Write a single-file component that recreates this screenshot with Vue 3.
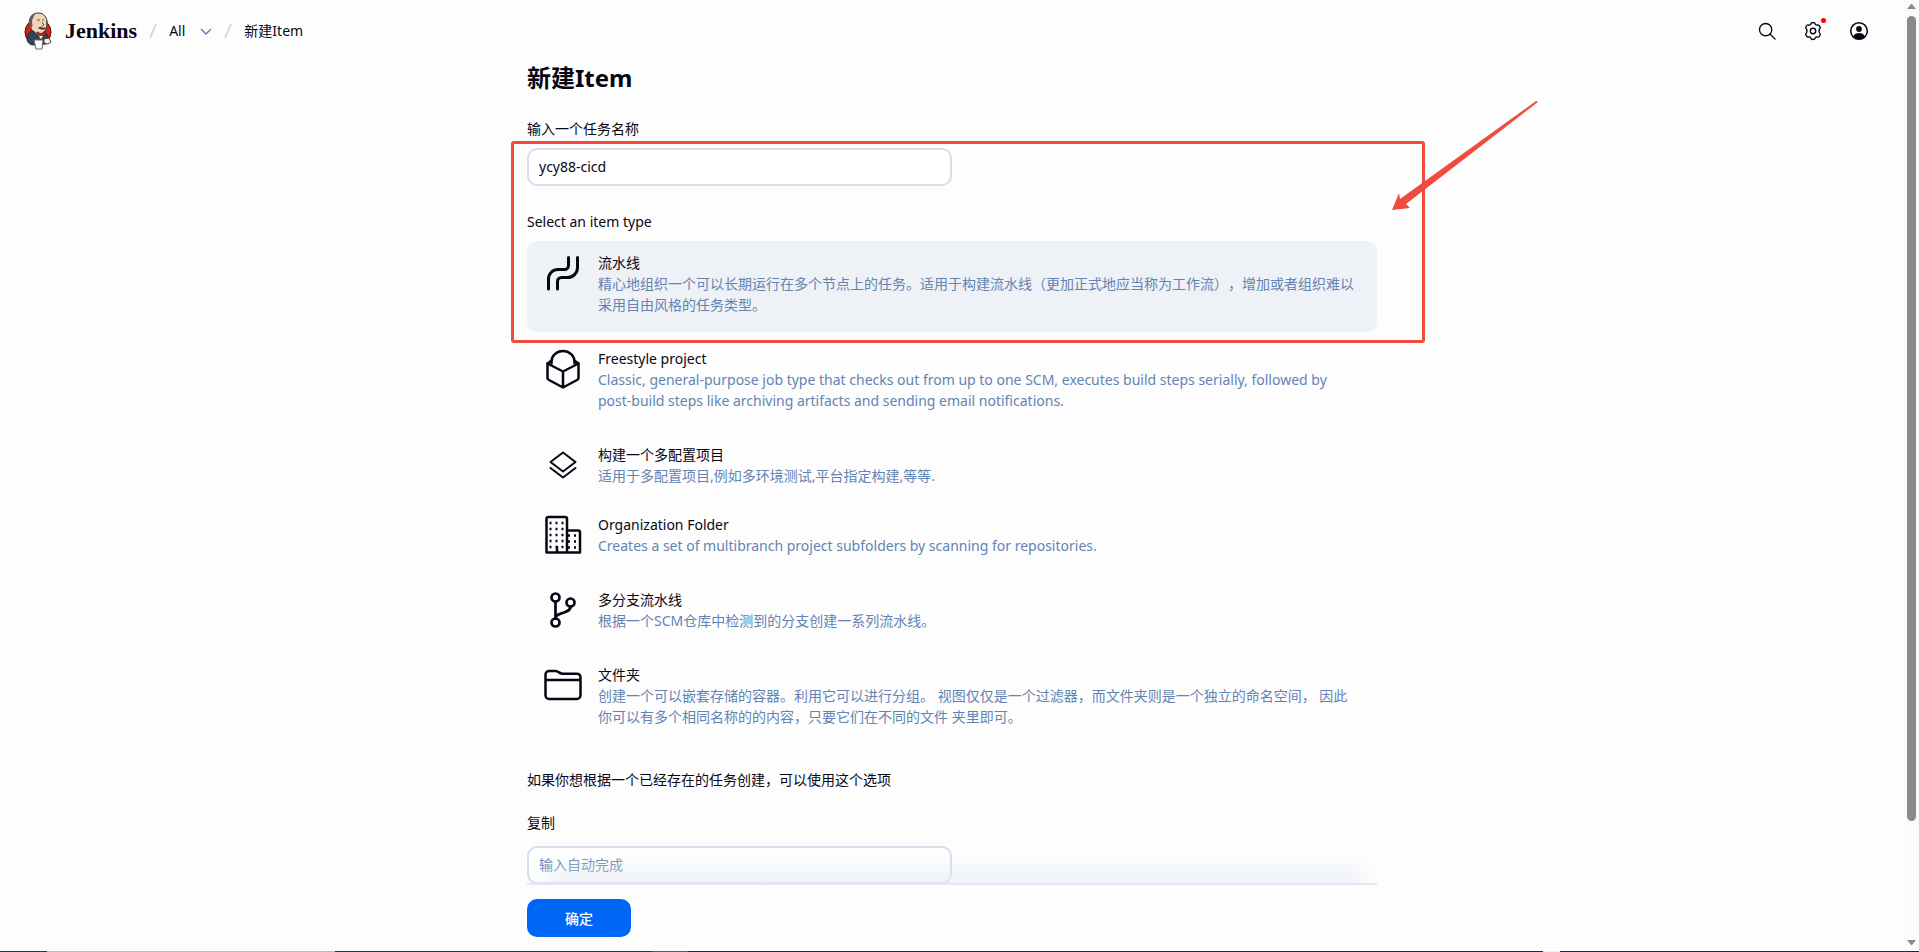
<script setup>
import { ref } from 'vue'

const name = ref('ycy88-cicd')
const copyFrom = ref('')
const selected = ref('pipeline')

const types = [
  {
    id: 'pipeline',
    title: '流水线',
    text: '精心地组织一个可以长期运行在多个节点上的任务。适用于构建流水线（更加正式地应当称为工作流），增加或者组织难以采用自由风格的任务类型。'
  },
  {
    id: 'freestyle',
    title: 'Freestyle project',
    text: 'Classic, general-purpose job type that checks out from up to one SCM, executes build steps serially, followed by post-build steps like archiving artifacts and sending email notifications.'
  },
  {
    id: 'matrix',
    title: '构建一个多配置项目',
    text: '适用于多配置项目,例如多环境测试,平台指定构建,等等.'
  },
  {
    id: 'organization',
    title: 'Organization Folder',
    text: 'Creates a set of multibranch project subfolders by scanning for repositories.'
  },
  {
    id: 'multibranch',
    title: '多分支流水线',
    text: '根据一个SCM仓库中检测到的分支创建一系列流水线。'
  },
  {
    id: 'folder',
    title: '文件夹',
    text: '创建一个可以嵌套存储的容器。利用它可以进行分组。 视图仅仅是一个过滤器，而文件夹则是一个独立的命名空间， 因此你可以有多个相同名称的的内容，只要它们在不同的文件 夹里即可。'
  }
]
</script>

<template>
  <div class="window">
    <div class="page">
      <header class="header">
        <nav class="crumbs" aria-label="Breadcrumb">
          <a class="brand" href="#">
            <svg class="logo" viewBox="0 0 28 38" aria-hidden="true">
              <ellipse cx="14" cy="20" rx="13" ry="13" fill="#d3201c" stroke="#4a1512" stroke-width="1" />
              <path d="M6 13C5 5 9 1 14 1c6 0 9 4 9 10 0 7-3 11-7 11-5 0-9-3-10-9z" fill="#f0d6b7" stroke="#3a2a25" stroke-width="1" />
              <path d="M5 13C4 6 7 2 12 1 9 4 9 7 8 9c0 3 1 4 0 6-1 1-3 0-3-2z" fill="#5d5a5c" />
              <path d="M22 6c2 2 2 5 1 8l-1-4z" fill="#5d5a5c" />
              <path d="M13 8h3M18 8h2M18 10l2 3-2 1" fill="none" stroke="#6b5142" stroke-width="1" />
              <path d="M14 16c2-2 4-1 5 0 1-1 3-1 3 1-3 1-5 1-8-1z" fill="#49403c" />
              <path d="M4 22c2-2 3-3 5-3l7 5 5-3c2 1 3 2 3 4l-2 7-12 1c-4 0-6-2-7-5z" fill="#2c4858" stroke="#1a2d38" stroke-width="1" />
              <path d="M11 20l6 7 4-6-4 1z" fill="#fff" />
              <path d="M13 20l4 2 4-3v5l-4-1-4 2z" fill="#d33833" stroke="#5a1512" stroke-width="1" />
              <path d="M20 27l5-1 2 4-3 2-4-1z" fill="#f4f4f4" stroke="#49403c" stroke-width="1" />
              <path d="M10 28h9l-1 9h-6z" fill="#fff" stroke="#6a6a6a" stroke-width="1" />
            </svg>
            <span class="wordmark">Jenkins</span>
          </a>
          <svg class="slash" viewBox="0 0 8 16" aria-hidden="true"><path d="M7 1L1 15" /></svg>
          <a class="crumb" href="#">All</a>
          <button class="more" type="button" aria-label="All">
            <svg viewBox="0 0 12 12" aria-hidden="true"><path d="M1 4l5 5 5-5" /></svg>
          </button>
          <svg class="slash" viewBox="0 0 8 16" aria-hidden="true"><path d="M7 1L1 15" /></svg>
          <span class="crumb" aria-current="page">新建Item</span>
        </nav>
        <div class="actions">
          <button class="action" type="button" aria-label="Search">
            <svg viewBox="0 0 512 512" aria-hidden="true">
              <path d="M221 64a157 157 0 10157 157A157 157 0 00221 64z" fill="none" stroke="currentColor" stroke-width="34" />
              <path d="M338 338l126 126" fill="none" stroke="currentColor" stroke-width="34" stroke-linecap="round" />
            </svg>
          </button>
          <button class="action" type="button" aria-label="Manage">
            <svg viewBox="0 0 20 20" fill="none" stroke="currentColor" stroke-width="1.4" stroke-linejoin="round" aria-hidden="true">
              <circle cx="10" cy="10" r="2.7" />
              <path d="M10 1.500c1.200 0 1.900.2 2.100 1.100.3 1.300 1.200 1.800 2.500 1.400.9-.3 1.500.1 2.200 1.300s.7 1.900 0 2.500c-1 .9-1 3.500 0 4.400.7.600.6 1.300 0 2.500s-1.300 1.600-2.200 1.300c-1.300-.4-2.200.1-2.500 1.400-.2.9-.9 1.100-2.100 1.100s-1.900-.2-2.100-1.100c-.3-1.300-1.200-1.800-2.500-1.400-.9.3-1.500-.1-2.200-1.300s-.7-1.900 0-2.500c1-.9 1-3.500 0-4.400-.7-.6-.6-1.300 0-2.500S4.500 3.700 5.400 4c1.300.4 2.200-.1 2.500-1.400.2-.9.9-1.100 2.100-1.100z" />
            </svg>
            <span class="badge"></span>
          </button>
          <button class="action" type="button" aria-label="Account">
            <svg viewBox="0 0 20 20" aria-hidden="true">
              <circle cx="10" cy="10" r="8.300" fill="none" stroke="currentColor" stroke-width="1.500" />
              <circle cx="10" cy="8" r="2.900" fill="currentColor" />
              <path d="M4.300 15.500c1-2.400 3-3.400 5.700-3.400s4.700 1 5.700 3.400c-1.500 1.700-3.400 2.600-5.700 2.600s-4.200-.9-5.700-2.600z" fill="currentColor" />
            </svg>
          </button>
        </div>
      </header>

      <form class="form" @submit.prevent>
        <div class="scroll">
          <div class="column">
            <h1>新建Item</h1>
            <label class="label" for="name">输入一个任务名称</label>
            <input id="name" v-model="name" class="field" type="text" />

            <h2 id="type-label" class="label type-label">Select an item type</h2>
            <div class="types" role="radiogroup" aria-labelledby="type-label">
              <label
                v-for="t in types"
                :key="t.id"
                :class="['type', 'type-' + t.id, { selected: selected === t.id }]"
              >
                <input v-model="selected" class="radio" type="radio" name="type" :value="t.id" />
                <svg class="icon" viewBox="0 0 48 48" aria-hidden="true">
                  <g v-if="t.id === 'pipeline'" stroke-width="3">
                    <path d="M29.500 8.500v8a4 4 0 01-4 4H19A9.500 9.500 0 009.500 30v10M38.500 8.500v10a10 10 0 01-10 10h-6a4 4 0 00-4 4v7.500" />
                  </g>
                  <g v-else-if="t.id === 'freestyle'" stroke-width="2.500">
                    <path d="M12.500 18.500V16.500a11.500 10.500 0 0123 0V18.500" />
                    <path d="M24 42.500L10 35c-1-.6-1.500-1.200-1.500-2.300V18.500M24 42.500L38 35c1-.6 1.500-1.200 1.500-2.300V18.500M24 26.500v16" />
                    <path d="M8.500 18.500L24 26.500l15.500-8-3.500-2.500M8.500 18.500l3.500-2.500" />
                  </g>
                  <g v-else-if="t.id === 'matrix'" stroke-width="2">
                    <path d="M24 11.500l12.500 9.500L24 30.500 11.500 21zM11.500 27L24 36.500 36.500 27" />
                  </g>
                  <g v-else-if="t.id === 'organization'" stroke-width="2.500">
                    <path d="M28 41.500V8a2 2 0 00-2-2H9.500a2 2 0 00-2 2v33.500H41V21.500a2 2 0 00-2-2H28M18 36v5.500" />
                    <path class="windows" d="M10.500 12h16M10.500 18h16M10.500 24h16M10.500 30h16M10.500 36h16M29 24.500h9M29 30.500h9M29 36.500h9" />
                  </g>
                  <g v-else-if="t.id === 'multibranch'" stroke-width="2.700">
                    <circle cx="16.500" cy="11.500" r="4" />
                    <circle cx="31.500" cy="16.500" r="4" />
                    <circle cx="16.500" cy="36.500" r="4" />
                    <path d="M16.500 15.500v17M31.500 20.500c0 8-15 5-15 12" />
                  </g>
                  <g v-else stroke-width="2.500">
                    <path d="M10 10h6.500c3 0 4 2.700 7 2.700H38a3.500 3.500 0 013.500 3.500V34.500A3.500 3.500 0 0138 38H10a3.500 3.500 0 01-3.500-3.500v-21A3.500 3.500 0 0110 10zM6.500 19h35" />
                  </g>
                </svg>
                <span class="copy">
                  <span class="title">{{ t.title }}</span>
                  <span class="desc">{{ t.text }}</span>
                </span>
              </label>
            </div>

            <p class="hint">如果你想根据一个已经存在的任务创建，可以使用这个选项</p>
            <label class="label copy-label" for="from">复制</label>
            <input id="from" v-model="copyFrom" class="field" type="text" placeholder="输入自动完成" />

            <div class="frame" aria-hidden="true"></div>
            <svg class="arrow" viewBox="0 0 146 112" aria-hidden="true">
              <path d="M0 110l7-17 1 6L144 1l2 1L14 104l4 4z" />
            </svg>
          </div>
        </div>
        <div class="bottom">
          <button class="submit" type="submit">确定</button>
        </div>
      </form>
    </div>

    <div class="scrollbar" aria-hidden="true">
      <svg viewBox="0 0 9 5"><path d="M0 5L4 0h1l4 5z" /></svg>
      <div class="track"><div class="thumb"></div></div>
      <svg viewBox="0 0 9 5"><path d="M0 0l4 5h1l4-5z" /></svg>
    </div>
    <div class="edge" aria-hidden="true"></div>
  </div>
</template>

<style>
body {
  background: #fdfdfe;
}
</style>

<style scoped>
* {
  box-sizing: border-box;
}
.window {
  display: grid;
  grid-template: minmax(0, 1fr) 1px / minmax(0, 1fr) 15px;
  height: 100vh;
  color: #070714;
  font: 14px/21px "Noto Sans", "Noto Sans CJK SC", sans-serif;
  text-spacing-trim: space-all;
}
.page {
  display: flex;
  flex-direction: column;
  min-height: 0;
}
.header {
  display: flex;
  flex: none;
  align-items: center;
  justify-content: space-between;
  height: 62px;
  padding: 0 33px 0 24px;
}
.crumbs,
.brand,
.actions {
  display: flex;
  align-items: center;
}
.brand,
.crumb {
  color: inherit;
  text-decoration: none;
}
.crumb {
  padding-bottom: 2px;
}
.logo {
  width: 28px;
  height: 38px;
}
.wordmark {
  margin-left: 13px;
  font: bold 22px/30px "Liberation Serif", serif;
}
.slash {
  width: 8px;
  height: 16px;
  margin: 0 12px;
  fill: none;
  stroke: #d3dbea;
  stroke-width: 2;
}
button {
  padding: 0;
  border: 0;
  background: none;
  color: inherit;
  font: inherit;
}
.more {
  display: flex;
  margin-left: 15px;
}
.more svg {
  width: 12px;
  height: 12px;
  fill: none;
  stroke: #5a86bf;
  stroke-width: 1.5;
}
.actions {
  gap: 22px;
}
.action {
  position: relative;
  display: grid;
  width: 24px;
  height: 24px;
  place-items: center;
}
.action svg {
  width: 20px;
  height: 20px;
}
.badge {
  position: absolute;
  top: -1px;
  right: -1px;
  width: 5px;
  height: 5px;
  border-radius: 50%;
  background: #f00;
}
.form {
  display: flex;
  flex: 1;
  flex-direction: column;
  min-height: 0;
}
.scroll {
  flex: 1;
  min-height: 0;
  overflow: hidden;
}
.column,
.bottom {
  position: relative;
  width: 100%;
  max-width: 850px;
  margin: 0 auto;
}
h1 {
  margin: 0;
  font-size: 24px;
  line-height: 32px;
}
.label {
  display: block;
  margin: 24px 0 9px;
}
.field {
  display: block;
  width: 50%;
  height: 38px;
  padding: 0 10px 2px;
  border: 2px solid #d7deeb;
  border-radius: 10px;
  background: #fff;
  color: inherit;
  font: inherit;
}
.field::placeholder {
  color: #6384b3;
  opacity: 1;
}
.type-label {
  margin: 25px 0 9px;
  font-size: 14px;
  font-weight: 400;
}
.type {
  position: relative;
  display: flex;
  gap: 11px;
  margin-bottom: 5px;
  padding: 8px 16px 17px 12px;
  border-radius: 10px;
}
.type.selected {
  background: #eef1f6;
}
.type-matrix {
  margin-bottom: 0;
}
.radio {
  position: absolute;
  opacity: 0;
}
.icon {
  flex: none;
  width: 48px;
  height: 48px;
  margin-bottom: -3px;
  fill: none;
  stroke: currentColor;
  stroke-linecap: round;
  stroke-linejoin: round;
}
.windows {
  stroke-dasharray: 2 4;
  stroke-linecap: butt;
}
.copy {
  padding-top: 3px;
}
.title,
.desc {
  display: block;
}
.desc {
  color: #6384b3;
}
.hint {
  margin: 25px 0 22px;
}
.copy-label {
  margin: 22px 0 13px;
}
.frame {
  position: absolute;
  top: 79px;
  right: -48px;
  left: -16px;
  height: 202px;
  border: 3px solid #f04b3f;
  border-radius: 3px;
}
.arrow {
  position: absolute;
  top: 38px;
  left: 865px;
  width: 146px;
  height: 112px;
  fill: #f04b3f;
}
.bottom {
  flex: none;
  padding: 14px 0;
  border-top: 2px solid #e2e8f1;
}
.bottom::before {
  position: absolute;
  right: 0;
  bottom: 100%;
  left: 0;
  height: 30px;
  margin-bottom: 2px;
  background: linear-gradient(to top, #e4eaf299, #e4eaf200);
  mask: linear-gradient(to right, transparent, #000 30px, #000 calc(100% - 30px), transparent);
  content: "";
}
.submit {
  display: block;
  width: 104px;
  height: 38px;
  border-radius: 10px;
  background: #0066f5;
  color: #fff;
  font-weight: 500;
}
.scrollbar {
  display: flex;
  flex-direction: column;
  align-items: center;
  padding: 4px 0 6px;
  background: #fbfbfb;
}
.scrollbar svg {
  width: 9px;
  height: 5px;
  fill: #8b8b8b;
}
.track {
  flex: 1;
  padding: 7px 0;
}
.thumb {
  width: 9px;
  height: 87.8%;
  border-radius: 5px;
  background: #8b8b8b;
}
.edge {
  grid-column: 1 / -1;
  background: linear-gradient(to right, #24383f 47px, #bdbdbd 47px 335px, #24383f 335px 652px, #535c66 652px 688px, #20283a 688px 1543px, #f2f2f2 1543px 1560px, #20283a 1560px);
}
</style>
